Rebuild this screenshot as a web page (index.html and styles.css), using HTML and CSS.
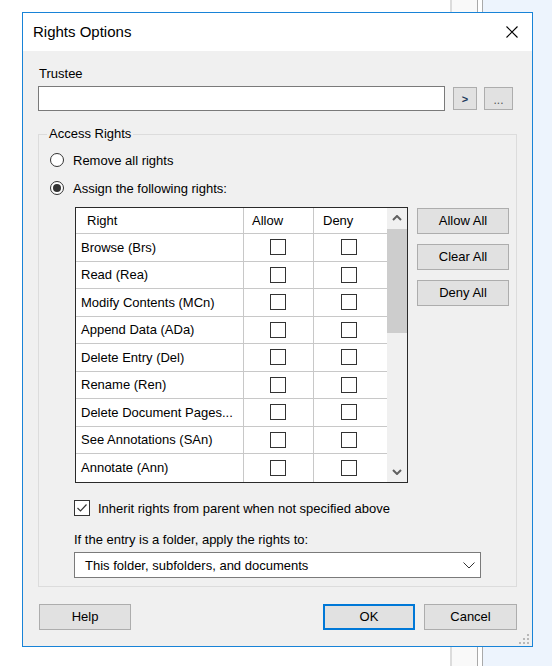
FILE: index.html
```html
<!DOCTYPE html>
<html>
<head>
<meta charset="utf-8">
<title>Rights Options</title>
<link rel="stylesheet" href="styles.css">
</head>
<body>
<div class="desk">
  <div class="bw-a"></div>
  <div class="bw-b"></div>
  <div class="bw-c"></div>
</div>

<div class="dialog">
  <div class="titlebar">
    <span class="title">Rights Options</span>
    <svg class="close" width="12" height="12" viewBox="0 0 12 12"><path d="M0.5 0.5 L11.5 11.5 M11.5 0.5 L0.5 11.5" stroke="#000" stroke-width="1.1" fill="none"/></svg>
  </div>

  <div class="content">
    <div class="trustee-label">Trustee</div>
    <div class="trustee-row">
      <div class="textbox"></div>
      <div class="btn btn-go">&gt;</div>
      <div class="btn btn-browse">...</div>
    </div>

    <fieldset class="group">
      <legend>Access Rights</legend>
      <div class="radio-row"><span class="radio"></span><span>Remove all rights</span></div>
      <div class="radio-row"><span class="radio on"></span><span>Assign the following rights:</span></div>

      <div class="rights">
        <div class="list">
          <div class="list-body">
            <div class="lrow head"><div class="c c-name">Right</div><div class="c c-allow">Allow</div><div class="c c-deny">Deny</div></div>
            <div class="lrow"><div class="c c-name">Browse (Brs)</div><div class="c c-allow"><span class="cb"></span></div><div class="c c-deny"><span class="cb"></span></div></div>
            <div class="lrow"><div class="c c-name">Read (Rea)</div><div class="c c-allow"><span class="cb"></span></div><div class="c c-deny"><span class="cb"></span></div></div>
            <div class="lrow"><div class="c c-name">Modify Contents (MCn)</div><div class="c c-allow"><span class="cb"></span></div><div class="c c-deny"><span class="cb"></span></div></div>
            <div class="lrow"><div class="c c-name">Append Data (ADa)</div><div class="c c-allow"><span class="cb"></span></div><div class="c c-deny"><span class="cb"></span></div></div>
            <div class="lrow"><div class="c c-name">Delete Entry (Del)</div><div class="c c-allow"><span class="cb"></span></div><div class="c c-deny"><span class="cb"></span></div></div>
            <div class="lrow"><div class="c c-name">Rename (Ren)</div><div class="c c-allow"><span class="cb"></span></div><div class="c c-deny"><span class="cb"></span></div></div>
            <div class="lrow"><div class="c c-name">Delete Document Pages...</div><div class="c c-allow"><span class="cb"></span></div><div class="c c-deny"><span class="cb"></span></div></div>
            <div class="lrow"><div class="c c-name">See Annotations (SAn)</div><div class="c c-allow"><span class="cb"></span></div><div class="c c-deny"><span class="cb"></span></div></div>
            <div class="lrow last"><div class="c c-name">Annotate (Ann)</div><div class="c c-allow"><span class="cb"></span></div><div class="c c-deny"><span class="cb"></span></div></div>
          </div>
          <div class="vscroll">
            <div class="sb-btn"><svg width="10" height="6" viewBox="0 0 10 6"><path d="M1 5 L5 1 L9 5" stroke="#606060" stroke-width="2" fill="none"/></svg></div>
            <div class="sb-thumb"></div>
            <div class="sb-fill"></div>
            <div class="sb-btn"><svg width="10" height="6" viewBox="0 0 10 6"><path d="M1 1 L5 5 L9 1" stroke="#606060" stroke-width="2" fill="none"/></svg></div>
          </div>
        </div>
        <div class="side-btns">
          <div class="btn side">Allow All</div>
          <div class="btn side">Clear All</div>
          <div class="btn side">Deny All</div>
        </div>
      </div>

      <div class="check-row">
        <span class="cb checked"><svg width="14" height="14" viewBox="0 0 14 14"><path d="M2.5 7 L5.5 10 L11.5 3.5" stroke="#333" stroke-width="1.2" fill="none"/></svg></span>
        <span>Inherit rights from parent when not specified above</span>
      </div>
      <div class="apply-label">If the entry is a folder, apply the rights to:</div>
      <div class="combo">
        <span>This folder, subfolders, and documents</span>
        <svg width="12" height="7" viewBox="0 0 12 7"><path d="M0.5 0.5 L6 6 L11.5 0.5" stroke="#333" stroke-width="1" fill="none"/></svg>
      </div>
    </fieldset>

    <div class="footer">
      <div class="btn foot help">Help</div>
      <div class="spacer"></div>
      <div class="btn foot ok">OK</div>
      <div class="btn foot cancel">Cancel</div>
    </div>
  </div>

  <svg class="grip" width="10" height="10" viewBox="0 0 10 10">
    <rect x="8" y="0" width="2" height="2" fill="#b8b8b8"/>
    <rect x="4" y="4" width="2" height="2" fill="#b8b8b8"/>
    <rect x="8" y="4" width="2" height="2" fill="#b8b8b8"/>
    <rect x="0" y="8" width="2" height="2" fill="#b8b8b8"/>
    <rect x="4" y="8" width="2" height="2" fill="#b8b8b8"/>
    <rect x="8" y="8" width="2" height="2" fill="#b8b8b8"/>
  </svg>
</div>
</body>
</html>
```

FILE: styles.css
```css
* { box-sizing: border-box; }
html, body { margin: 0; }
body {
  width: 552px;
  height: 666px;
  padding: 12px 0 0 22px;
  background: #fff;
  font-family: "Liberation Sans", Arial, sans-serif;
  font-size: 13px;
  color: #000;
  position: relative;
  overflow: hidden;
}

/* window behind the dialog */
.desk {
  position: absolute;
  left: 450px;
  top: 0;
  width: 102px;
  height: 666px;
  display: flex;
}
.bw-a { width: 28px; border-left: 2px solid #dcdcdc; border-right: 1px solid #a9a9a9; background: #f9f9f9; }
.bw-b { width: 5px; border-right: 1px solid #a9a9a9; background: #fff; }
.bw-c { flex: 1; background: #edf4fd; }

.dialog {
  position: relative;
  z-index: 1;
  width: 511px;
  height: 635px;
  border: 1px solid #1883d7;
  background: #f0f0f0;
  display: flex;
  flex-direction: column;
}

.titlebar {
  height: 38px;
  background: #fff;
  display: flex;
  align-items: center;
  justify-content: space-between;
  padding: 0 14px 0 10px;
}
.title { font-size: 15px; line-height: 18px; }
.close { display: block; }

.content { padding: 15px 15px 0 15px; }

.trustee-label { line-height: 16px; margin-left: 1px; }
.trustee-row { display: flex; align-items: center; margin-top: 4px; height: 25px; }
.textbox { width: 407px; height: 25px; border: 1px solid #7a7a7a; background: #fff; }

.btn {
  background: #e1e1e1;
  border: 1px solid #adadad;
  display: flex;
  align-items: center;
  justify-content: center;
  line-height: 16px;
}
.btn-go { width: 24px; height: 23px; margin-left: 8px; font-size: 11px; font-weight: bold; color: #1c3a5c; }
.btn-browse { width: 29px; height: 23px; margin-left: 7px; color: #555; font-size: 12px; padding-top: 2px; }

.group {
  margin: 15px 0 0 0;
  width: 479px;
  border: 1px solid #dcdcdc;
  padding: 0 0 8px 0;
  min-width: 0;
}
.group legend {
  margin-left: 8px;
  padding: 0 2px;
  line-height: 16px;
  font-size: 13px;
}

.radio-row { display: flex; align-items: center; height: 20px; margin-top: 8px; }
.radio {
  width: 14px;
  height: 14px;
  border: 1px solid #333;
  border-radius: 50%;
  background: #fff;
  margin: 0 9px 0 11px;
  display: flex;
  align-items: center;
  justify-content: center;
}
.radio.on::after {
  content: "";
  width: 8px;
  height: 8px;
  border-radius: 50%;
  background: #333;
}

.rights { display: flex; margin-top: 9px; }
.list {
  width: 333px;
  height: 276px;
  margin-left: 36px;
  border: 1px solid #2a2a2a;
  background: #fff;
  display: flex;
  overflow: hidden;
}
.list-body { width: 311px; }
.lrow { display: flex; height: 27.5px; border-bottom: 1px solid #c8c8c8; }
.lrow.head { height: 26px; }
.lrow.last { border-bottom: none; }
.c { display: flex; align-items: center; height: 100%; }
.c-name { width: 168px; border-right: 1px solid #c8c8c8; padding-left: 5px; white-space: nowrap; }
.head .c-name { padding-left: 11px; }
.c-allow { width: 70px; border-right: 1px solid #c8c8c8; justify-content: center; padding-right: 1px; }
.c-deny { width: 73px; justify-content: center; padding-right: 3px; }
.head .c-allow { justify-content: flex-start; padding-left: 8px; }
.head .c-deny { justify-content: flex-start; padding-left: 9px; }

.cb {
  width: 16px;
  height: 16px;
  border: 1px solid #333;
  background: #fff;
  display: flex;
  align-items: center;
  justify-content: center;
}

.vscroll { width: 20px; background: #f0f0f0; display: flex; flex-direction: column; }
.sb-btn { height: 20px; display: flex; align-items: center; justify-content: center; }
.sb-thumb { height: 104px; margin-top: 1px; background: #cdcdcd; }
.sb-fill { flex: 1; }

.side-btns { display: flex; flex-direction: column; gap: 10px; margin: 1px 0 0 9px; }
.btn.side { width: 92px; height: 26px; }

.check-row { display: flex; align-items: center; height: 20px; margin-top: 15px; padding-left: 35px; }
.check-row .cb { margin-right: 8px; }

.apply-label { line-height: 16px; margin-top: 14px; padding-left: 35px; }
.combo {
  margin: 4px 0 0 35px;
  width: 407px;
  height: 26px;
  border: 1px solid #7a7a7a;
  background: #fff;
  display: flex;
  align-items: center;
  justify-content: space-between;
  padding: 0 5px 0 10px;
}

.footer { display: flex; margin-top: 17px; }
.spacer { flex: 1; }
.btn.foot { height: 26px; }
.help { width: 92px; margin-left: 1px; }
.ok { width: 92px; border: 2px solid #0078d7; }
.cancel { width: 93px; margin-left: 9px; }

.grip { position: absolute; right: 3px; bottom: 2px; }
```
